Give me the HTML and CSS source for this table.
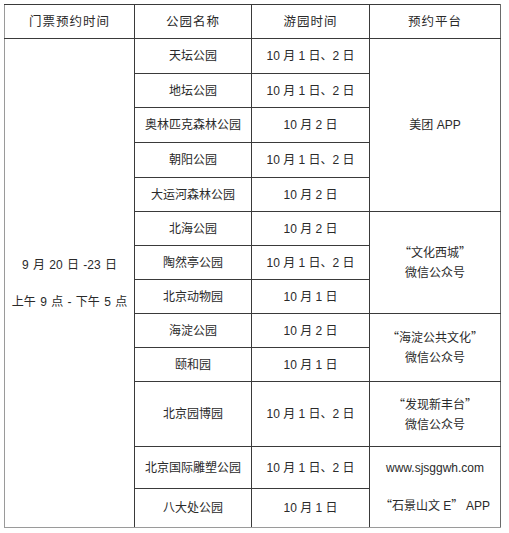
FILE: index.html
```html
<!DOCTYPE html>
<html lang="zh-CN">
<head>
<meta charset="utf-8">
<title>门票预约时间</title>
<link rel="stylesheet" href="styles.css">
</head>
<body>
<div class="wrap">
<table class="sched">
  <colgroup>
    <col class="c1"><col class="c2"><col class="c3"><col class="c4">
  </colgroup>
  <thead>
    <tr class="h34">
      <th class="first">门票预约时间</th>
      <th>公园名称</th>
      <th>游园时间</th>
      <th class="last">预约平台</th>
    </tr>
  </thead>
  <tbody>
    <tr class="h35">
      <td class="first time" rowspan="13">
        <span class="tline">9 月 20 日 -23 日</span>
        <span class="tline">上午 9 点 - 下午 5 点</span>
      </td>
      <td>天坛公园</td>
      <td>10 月 1 日、2 日</td>
      <td class="last plat p-meituan" rowspan="5">美团 APP</td>
    </tr>
    <tr class="h34"><td>地坛公园</td><td>10 月 1 日、2 日</td></tr>
    <tr class="h35"><td>奥林匹克森林公园</td><td>10 月 2 日</td></tr>
    <tr class="h35"><td>朝阳公园</td><td>10 月 1 日、2 日</td></tr>
    <tr class="h34"><td>大运河森林公园</td><td>10 月 2 日</td></tr>
    <tr class="h34">
      <td>北海公园</td><td>10 月 2 日</td>
      <td class="last plat" rowspan="3"><span class="q">“</span>文化西城<span class="q">”</span><br>微信公众号</td>
    </tr>
    <tr class="h34"><td>陶然亭公园</td><td>10 月 1 日、2 日</td></tr>
    <tr class="h34"><td>北京动物园</td><td>10 月 1 日</td></tr>
    <tr class="h34">
      <td>海淀公园</td><td>10 月 2 日</td>
      <td class="last plat" rowspan="2"><span class="q">“</span>海淀公共文化<span class="q">”</span><br>微信公众号</td>
    </tr>
    <tr class="h34"><td>颐和园</td><td>10 月 1 日</td></tr>
    <tr class="h65">
      <td>北京园博园</td><td>10 月 1 日、2 日</td>
      <td class="last plat p-fengtai"><span class="q">“</span>发现新丰台<span class="q">”</span><br>微信公众号</td>
    </tr>
    <tr class="h42">
      <td>北京国际雕塑公园</td><td>10 月 1 日、2 日</td>
      <td class="last plat p-sjs" rowspan="2">
        <span class="sline">www.sjsggwh.com</span>
        <span class="sline"><span class="q">“</span>石景山文 E<span class="q">”</span> APP</span>
      </td>
    </tr>
    <tr class="h39"><td class="bottom">八大处公园</td><td class="bottom">10 月 1 日</td></tr>
  </tbody>
</table>
</div>
</body>
</html>
```

FILE: styles.css
```css
html, body {
  margin: 0;
  padding: 0;
  background: #ffffff;
}

.wrap {
  padding: 4px 0 0 4px;
}

.sched {
  border-collapse: collapse;
  table-layout: fixed;
  width: 497px;
  font-family: "Liberation Sans", "Noto Sans CJK SC", sans-serif;
  font-size: 12px;
  color: #2a2a2a;
  border-top: 1px solid #3a3a3a;
  border-bottom: 1px solid #9a9a9a;
}

.c1 { width: 130px; }
.c2 { width: 117px; }
.c3 { width: 118px; }
.c4 { width: 131px; }

.sched th,
.sched td {
  border: 1px solid #3a3a3a;
  padding: 0;
  text-align: center;
  vertical-align: middle;
  line-height: 20px;
}

.sched th {
  font-weight: normal;
  font-size: 12.5px;
  letter-spacing: 1px;
}

.sched .first {
  border-left: 1px solid #9a9a9a;
}

.sched .last {
  border-right: 1px solid #6a6a6a;
}

.sched .bottom,
.sched .time,
.sched .p-sjs {
  border-bottom: 1px solid #9a9a9a;
}

.h34 { height: 34px; }
.h35 { height: 35px; }
.h39 { height: 39px; }
.h42 { height: 42px; }
.h65 { height: 65px; }

.q {
  font-family: "Noto Sans CJK SC", sans-serif;
}

.time .tline {
  display: block;
  line-height: 18px;
  word-spacing: 1px;
}

.time .tline + .tline {
  margin-top: 19px;
}

.p-fengtai {
  vertical-align: top;
  padding-top: 4px;
}

.p-sjs .sline {
  display: block;
  line-height: 18px;
}

.p-sjs .sline + .sline {
  margin-top: 19px;
}
```
